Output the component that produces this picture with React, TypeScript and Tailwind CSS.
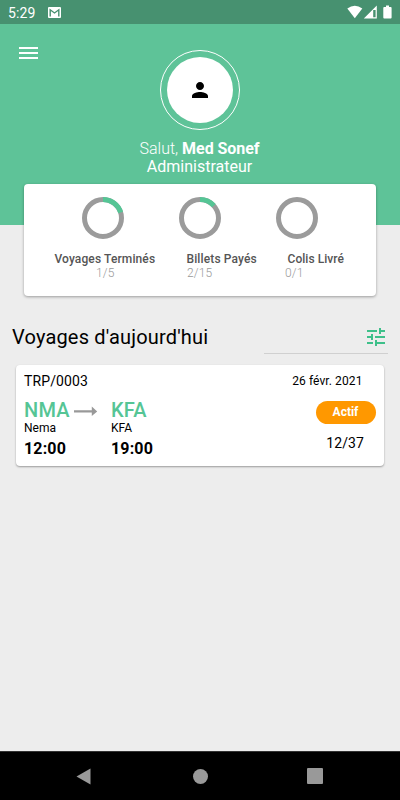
import React from "react";
import { MdPerson, MdTune } from "react-icons/md";

function Gauge({ value }: { value: number }) {
  const r = 18.5;
  const c = 2 * Math.PI * r;
  return (
    <svg width="42" height="42" viewBox="0 0 42 42" className="block">
      <circle cx="21" cy="21" r={r} fill="none" stroke="#9b9b9b" strokeWidth="5" />
      {value > 0 && (
        <circle
          cx="21"
          cy="21"
          r={r}
          fill="none"
          stroke="#55c595"
          strokeWidth="5"
          strokeDasharray={`${c * value} ${c}`}
          transform="rotate(-90 21 21)"
        />
      )}
    </svg>
  );
}

function StatusBar() {
  return (
    <div className="flex h-6 items-center bg-[#479170] pl-2 text-white">
      <span className="w-10 pt-px text-[14px] leading-6 tracking-[0.1px]">5:29</span>
      <svg width="13" height="11" viewBox="0 0 13 11" className="mt-px block">
        <rect width="13" height="11" rx="1" fill="#fff" />
        <path d="M2.2 9.5V2.8L6.5 6L10.8 2.8V9.5" fill="none" stroke="#479170" strokeWidth="1.4" />
      </svg>
      <svg width="46" height="14" viewBox="0 0 46 14" className="ml-auto mr-[7px] block" fill="#fff">
        <path d="M0.3 3.5Q7.8 -2.2 15.3 3.5L7.8 13.2Z" />
        <path fillRule="evenodd" d="M16.8 13.4L29.8 0.4V13.4ZM26.2 5V12.3H28.6V5Z" />
        <path d="M39 .6H42V2H43.7Q44.6 2 44.6 3V12.6Q44.6 13.5 43.7 13.5H37.2Q36.3 13.5 36.3 12.6V3Q36.3 2 37.2 2H39Z" />
      </svg>
    </div>
  );
}

function Header() {
  return (
    <header className="flex h-[201px] bg-[#5ec398] text-white">
      <div className="w-[100px] pl-[19px] pt-[23px]">
        <div className="flex w-[19px] flex-col gap-[3px]">
          <span className="h-[2px] bg-white" />
          <span className="h-[2px] bg-white" />
          <span className="h-[2px] bg-white" />
        </div>
      </div>
      <div className="flex w-[200px] flex-col items-center pt-[26px]">
        <div className="flex size-20 items-center justify-center rounded-full border border-white">
          <div className="flex size-[66px] items-center justify-center rounded-full bg-white">
            <MdPerson size={24} color="#000" />
          </div>
        </div>
        <div className="mt-[10px] whitespace-nowrap pr-px text-[16px] leading-[18px]">
          <span className="font-light">Salut, </span>
          <span className="font-bold tracking-[-0.05px]">Med Sonef</span>
        </div>
        <div className="whitespace-nowrap pr-px text-[16px] leading-[18px]">Administrateur</div>
      </div>
    </header>
  );
}

function StatsCard() {
  return (
    <section className="relative mx-6 -mt-[41px] h-[112px] rounded-[4px] bg-white pt-[13px] shadow-[0_1px_3px_rgba(0,0,0,0.35)]">
      <div className="flex gap-[55px] pl-[58px]">
        <Gauge value={0.2} />
        <Gauge value={0.1333} />
        <Gauge value={0} />
      </div>
      <div className="mt-[13px] flex whitespace-nowrap text-[12px] font-medium leading-[14px] tracking-[0.12px] text-[#555]">
        <span className="ml-[30.5px] w-[132px]">Voyages Terminés</span>
        <span className="w-[101px]">Billets Payés</span>
        <span className="tracking-[0.05px]">Colis Livré</span>
      </div>
      <div className="flex text-[12px] font-light leading-[14px] tracking-[0.15px] text-[#999]">
        <span className="ml-[72px] w-[91px]">1/5</span>
        <span className="w-[98px]">2/15</span>
        <span>0/1</span>
      </div>
    </section>
  );
}

function TripCard() {
  return (
    <article className="mx-4 mt-[11px] flex h-[101px] justify-between rounded-[4px] bg-white pl-2 pr-2 shadow-[0_1px_2px_rgba(0,0,0,0.35)]">
      <div className="pt-2">
        <div className="text-[14px] leading-4 tracking-[0.12px]">TRP/0003</div>
        <div className="mt-[9px] flex">
          <div className="w-[50px]">
            <div className="text-[20px] font-medium leading-6 tracking-[0.2px] text-[#55c595]">NMA</div>
            <div className="-mt-px text-[12px] leading-[14px]">Nema</div>
            <div className="mt-[4px] text-[16px] font-bold leading-5 tracking-[0.15px]">12:00</div>
          </div>
          <svg width="24" height="10" viewBox="0 0 24 10" className="mt-[8px] block">
            <path d="M0 4.2H17.8V0.6L23.2 5.4L17.8 10V6.6H0Z" fill="#999" />
          </svg>
          <div className="ml-[13px]">
            <div className="text-[20px] font-medium leading-6 tracking-[0.2px] text-[#55c595]">KFA</div>
            <div className="-mt-px text-[12px] leading-[14px]">KFA</div>
            <div className="mt-[4px] text-[16px] font-bold leading-5 tracking-[0.15px]">19:00</div>
          </div>
        </div>
      </div>
      <div className="flex flex-col items-end pt-2">
        <div className="mr-[13.5px] text-[12px] leading-4 tracking-[0.1px]">26 févr. 2021</div>
        <div className="mt-3 h-[22.5px] w-[60px] rounded-full bg-[#ff9800] pr-px text-center text-[12px] font-bold leading-[22px] text-white">
          Actif
        </div>
        <div className="mr-[12px] mt-[11.5px] text-[14px] leading-4 tracking-[0.1px]">12/37</div>
      </div>
    </article>
  );
}

export default function App() {
  return (
    <div className="flex h-[800px] w-[400px] flex-col overflow-hidden bg-[#ededed] font-['Roboto',sans-serif] text-black">
      <StatusBar />
      <Header />
      <StatsCard />
      <div className="mt-[24px] flex h-[34px] justify-between pl-3 pr-3">
        <h1 className="whitespace-nowrap pt-[5px] text-[20px] leading-6 tracking-[0.18px]">Voyages d'aujourd'hui</h1>
        <div className="flex w-[124px] justify-end border-b border-[#d0d0d0] pr-[0.4px] pt-[5px]">
          <MdTune size={24} color="#3ec08a" />
        </div>
      </div>
      <TripCard />
      <nav className="mt-auto flex h-[49px] items-center border-t border-[#333] bg-black">
        <svg width="15" height="17" viewBox="0 0 15 17" className="ml-[76px] block">
          <path d="M0.5 8.5L14.5 0.5V16.5Z" fill="#999" />
        </svg>
        <span className="ml-[101.5px] size-[15px] rounded-full bg-[#999]" />
        <span className="ml-[99.5px] size-4 rounded-[1px] bg-[#999]" />
      </nav>
    </div>
  );
}
